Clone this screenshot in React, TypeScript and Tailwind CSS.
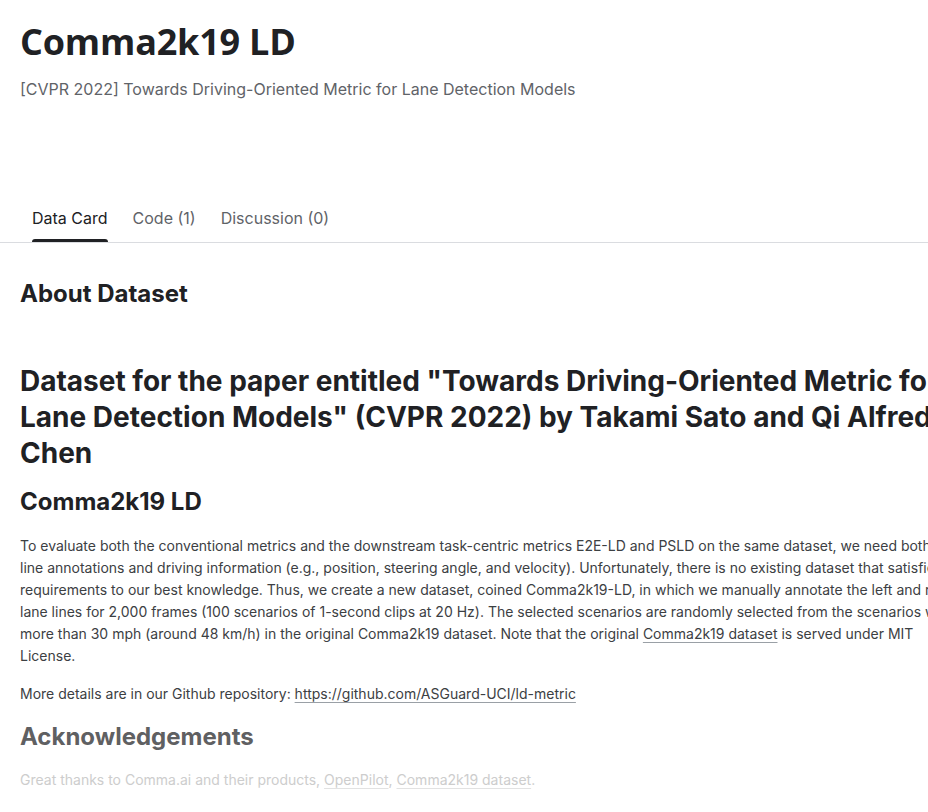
export default function App() {
  return (
    <div className="w-[928px] h-[812px] overflow-hidden bg-white text-[#202124] font-['Inter',sans-serif]">
      <header className="px-5 pt-5">
        <h1 className="text-[36px] leading-[44px] font-bold font-['Open_Sans',sans-serif] tracking-[-0.2px]">
          Comma2k19 LD
        </h1>
        <p className="mt-[13px] text-base leading-6 text-[#5f6368]">
          [CVPR 2022] Towards Driving-Oriented Metric for Lane Detection Models
        </p>
      </header>

      <nav className="mt-[105px] flex gap-[25px] pl-8 border-b border-[#dadce0]">
        <div className="flex flex-col">
          <span className="text-base leading-6 text-[#202124]">Data Card</span>
          <span className="mt-[9px] h-[3px] rounded-t-sm bg-[#202124]" />
        </div>
        <div className="flex flex-col">
          <span className="text-base leading-6 text-[#5f6368]">Code (1)</span>
          <span className="mt-[9px] h-[3px]" />
        </div>
        <div className="flex flex-col">
          <span className="text-base leading-6 text-[#5f6368]">Discussion (0)</span>
          <span className="mt-[9px] h-[3px]" />
        </div>
      </nav>

      {/* content is wider than the window, lines break as in the source */}
      <main className="w-[1100px] px-5">
        <h2 className="mt-[35px] text-2xl leading-8 font-bold">About Dataset</h2>

        <h1 className="mt-[53px] text-[28px] leading-9 font-bold whitespace-nowrap">
          Dataset for the paper entitled "Towards Driving-Oriented Metric for
          <br />
          Lane Detection Models" (CVPR 2022) by Takami Sato and Qi Alfred
          <br />
          Chen
        </h1>

        <h2 className="mt-[15px] text-2xl leading-8 font-bold">Comma2k19 LD</h2>

        <p className="mt-[17px] text-sm leading-[22px] text-[#3c4043] whitespace-nowrap">
          To evaluate both the conventional metrics and the downstream task-centric metrics E2E-LD and
          PSLD on the same dataset, we need both lane
          <br />
          line annotations and driving information (e.g., position, steering angle, and velocity).
          Unfortunately, there is no existing dataset that satisfies both
          <br />
          requirements to our best knowledge. Thus, we create a new dataset, coined Comma2k19-LD, in
          which we manually annotate the left and right
          <br />
          lane lines for 2,000 frames (100 scenarios of 1-second clips at 20 Hz). The selected
          scenarios are randomly selected from the scenarios with
          <br />
          more than 30 mph (around 48 km/h) in the original Comma2k19 dataset. Note that the
          original{' '}
          <a className="underline decoration-[#9aa0a6] underline-offset-[3px]">Comma2k19 dataset</a> is
          served under MIT
          <br />
          License.
        </p>

        <p className="mt-4 text-sm leading-[22px] text-[#3c4043]">
          More details are in our Github repository:{' '}
          <a className="underline decoration-[#9aa0a6] underline-offset-[3px]">
            https://github.com/ASGuard-UCI/ld-metric
          </a>
        </p>

        <h2 className="mt-4 text-2xl leading-8 font-bold text-[#5f6062]">Acknowledgements</h2>

        <p className="mt-4 text-sm leading-[22px] text-[#cdcdcd]">
          Great thanks to Comma.ai and their products,{' '}
          <a className="underline decoration-[#e2e2e2] underline-offset-[3px]">OpenPilot</a>,{' '}
          <a className="underline decoration-[#e2e2e2] underline-offset-[3px]">Comma2k19 dataset</a>.
        </p>
      </main>
    </div>
  );
}
